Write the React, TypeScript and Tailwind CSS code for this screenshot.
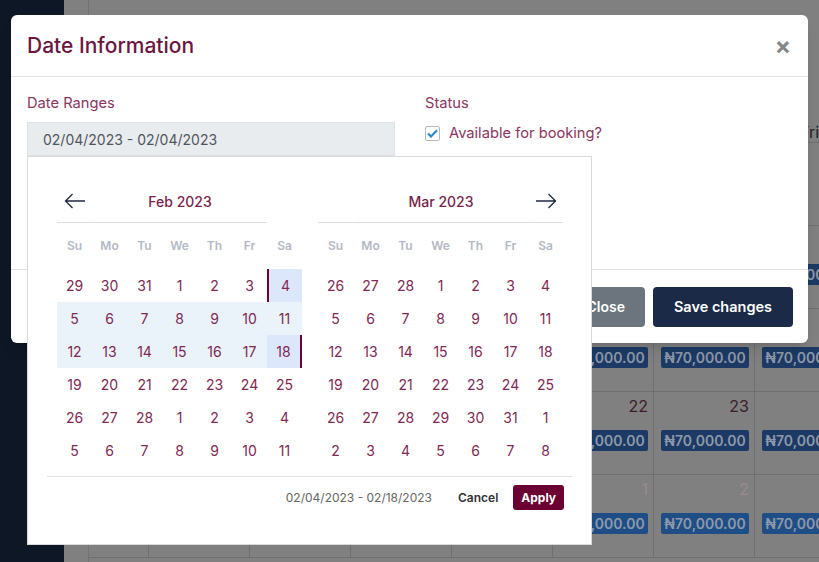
import React from "react";

const DAYS = ["Su", "Mo", "Tu", "We", "Th", "Fr", "Sa"];

const FEB = [
  [29, 30, 31, 1, 2, 3, 4],
  [5, 6, 7, 8, 9, 10, 11],
  [12, 13, 14, 15, 16, 17, 18],
  [19, 20, 21, 22, 23, 24, 25],
  [26, 27, 28, 1, 2, 3, 4],
  [5, 6, 7, 8, 9, 10, 11],
];

const MAR = [
  [26, 27, 28, 1, 2, 3, 4],
  [5, 6, 7, 8, 9, 10, 11],
  [12, 13, 14, 15, 16, 17, 18],
  [19, 20, 21, 22, 23, 24, 25],
  [26, 27, 28, 29, 30, 31, 1],
  [2, 3, 4, 5, 6, 7, 8],
];

type CellKind = "start" | "end" | "in" | "none";

// selected range is Feb 4 -> Feb 18, all in the left month
function februaryKind(r: number, c: number): CellKind {
  if (r === 0 && c === 6) return "start";
  if (r === 2 && c === 6) return "end";
  if (r === 1 || (r === 2 && c < 6)) return "in";
  return "none";
}

const cellClass: Record<CellKind, string> = {
  start: "bg-[#dde7fb] border-l-2 border-l-[#6b0032]",
  end: "bg-[#dde7fb] border-r-2 border-r-[#6b0032]",
  in: "bg-[#e9f3f9]",
  none: "",
};

function ArrowLeft() {
  return (
    <svg width="22" height="16" viewBox="0 0 22 16" fill="none">
      <path d="M21 8H1.5M8.5 1L1.5 8l7 7" stroke="#1f2940" strokeWidth="1.3" />
    </svg>
  );
}

function ArrowRight() {
  return (
    <svg width="22" height="16" viewBox="0 0 22 16" fill="none">
      <path d="M1 8h19.5M13.5 1l7 7-7 7" stroke="#1f2940" strokeWidth="1.3" />
    </svg>
  );
}

function Month({
  title,
  weeks,
  side,
}: {
  title: string;
  weeks: number[][];
  side: "left" | "right";
}) {
  return (
    <div className="w-[245px]">
      <div className="grid h-[43px] grid-cols-7">
        <div className="flex items-center justify-center border-b border-[#dcdde3]">
          {side === "left" && <ArrowLeft />}
        </div>
        <div className="col-span-5 flex items-center justify-center border-b border-l border-b-[#dcdde3] border-l-white text-[14px] font-medium text-[#7a1f4d]">
          {title}
        </div>
        <div
          className={
            side === "right"
              ? "flex items-center justify-center border-b border-l border-b-[#dcdde3] border-l-white"
              : "flex items-center justify-center"
          }
        >
          {side === "right" && <ArrowRight />}
        </div>
      </div>
      <div className="grid h-[46px] grid-cols-7 items-center text-center text-[12px] font-semibold text-[#b4b9c5]">
        {DAYS.map((d) => (
          <span key={d}>{d}</span>
        ))}
      </div>
      {weeks.map((week, r) => (
        <div key={r} className="grid h-[33px] grid-cols-7">
          {week.map((day, c) => {
            const kind = side === "left" ? februaryKind(r, c) : "none";
            return (
              <div
                key={c}
                className={`flex items-center justify-center text-[14px] text-[#7e2854] ${cellClass[kind]}`}
              >
                {day}
              </div>
            );
          })}
        </div>
      ))}
    </div>
  );
}

function DatePicker() {
  return (
    <div className="absolute left-0 top-full z-20 flex h-[389px] w-[565px] flex-col border border-[#dadada] bg-white">
      <div className="flex gap-[16px] pl-[29px] pt-[23px]">
        <Month title="Feb 2023" weeks={FEB} side="left" />
        <Month title="Mar 2023" weeks={MAR} side="right" />
      </div>
      <div className="mx-[19px] mt-[9px] flex items-center justify-end border-t border-[#dedede] pr-[8px] pt-[8px]">
        <span className="text-[12px] text-[#666]">02/04/2023 - 02/18/2023</span>
        <span className="ml-[26px] text-[12px] font-semibold text-[#333]">Cancel</span>
        <button className="ml-[15px] h-[25px] rounded-[3px] bg-[#6b0032] px-[8px] text-[12px] font-bold text-white">
          Apply
        </button>
      </div>
    </div>
  );
}

function Modal() {
  return (
    <div className="absolute left-[11px] top-[15px] z-10 w-[797px] rounded-[6px] bg-white shadow-lg">
      <div className="flex h-[62px] items-center justify-between border-b border-[#dee2e6] pl-4 pr-[17px]">
        <h2 className="text-[21px] font-medium text-[#6a1640]">Date Information</h2>
        <span className="text-[24px] font-bold leading-none text-[#858585]">×</span>
      </div>
      <div className="flex h-[192px] px-4 pt-4">
        <div className="w-[368px]">
          <div className="text-[14.7px] leading-[21px] text-[#8b3560]">Date Ranges</div>
          <div className="relative mt-2">
            <div className="flex h-[34px] items-center border border-[#dfe3e7] bg-[#e9ecef] px-[15px] text-[14px] text-[#4f555b]">
              02/04/2023 - 02/04/2023
            </div>
            <DatePicker />
          </div>
        </div>
        <div className="ml-[30px]">
          <div className="text-[14.7px] leading-[21px] text-[#8b3560]">Status</div>
          <div className="mt-[8px] flex items-center gap-[9px]">
            <span className="flex h-[15px] w-[15px] items-center justify-center rounded-[2px] border border-[#b9b9b9] bg-white">
              <svg width="11" height="9" viewBox="0 0 11 9" fill="none">
                <path d="M1 4.5l3 3L10 1.3" stroke="#2a8bcc" strokeWidth="2.2" />
              </svg>
            </span>
            <span className="text-[14.7px] text-[#8b3560]">Available for booking?</span>
          </div>
        </div>
      </div>
      <div className="flex h-[74px] items-center justify-end gap-2 border-t border-[#dee2e6] px-[15px]">
        <button className="h-[40px] rounded-[4px] bg-[#6c757d] px-5 text-[14px] font-semibold text-white">
          Close
        </button>
        <button className="h-[40px] w-[140px] rounded-[4px] bg-[#1b2a47] text-[14.5px] font-semibold text-white">
          Save changes
        </button>
      </div>
    </div>
  );
}

// rows of the booking calendar behind the modal
const ROWS = [
  { num: ["", "", "", "", "", "", "", ""], chip: "", numColor: "" },
  { num: ["", "", "", "", "", "", "", ""], chip: "bg-[#1c3a65]", numColor: "text-[#3b1b2c]" },
  { num: ["", "", "", "", "", "", "", ""], chip: "bg-[#1c3a65]", numColor: "text-[#3b1b2c]" },
  { num: ["", "", "", "", "", "22", "23", ""], chip: "bg-[#1c3a65]", numColor: "text-[#3b1b2c]" },
  { num: ["", "", "", "", "", "1", "2", ""], chip: "bg-[#1f4e86]", numColor: "text-[#9a8c92]" },
];

function Page() {
  return (
    <div className="flex h-[562px] w-[819px]">
      <div className="w-[64px] shrink-0 bg-[#0d1726]" />
      <div className="flex-1 overflow-hidden bg-[#808080] pl-[24px]">
        <div className="h-full w-[900px] border-l border-[#727272]">
          <div className="h-[120px]" />
          <div className="grid h-[23px] grid-cols-[60px_repeat(7,101px)] border-b border-[#6f6f6f] text-[16px] text-[#222]">
            <span />
            <span />
            <span />
            <span />
            <span />
            <span />
            <span />
            <span className="pl-[45px]">Fri</span>
          </div>
          {ROWS.map((row, r) => (
            <div
              key={r}
              className="grid h-[83px] grid-cols-[60px_repeat(7,101px)] border-b border-[#6f6f6f]"
            >
              {row.num.map((n, i) => (
                <div key={i} className="flex flex-col border-r border-[#6f6f6f] pl-[7px] pr-[5px] pt-[2px]">
                  <span className={`h-[22px] text-right text-[16px] ${row.numColor}`}>{n}</span>
                  {i > 0 && row.chip && (
                    <span
                      className={`mt-[14px] flex h-[21px] w-[88px] items-center justify-center rounded-[2px] text-[14px] font-semibold text-[#8d99a8] ${row.chip}`}
                    >
                      ₦70,000.00
                    </span>
                  )}
                </div>
              ))}
            </div>
          ))}
        </div>
      </div>
    </div>
  );
}

export default function App() {
  return (
    <div className="relative h-[562px] w-[819px] overflow-hidden font-['Inter',sans-serif]">
      <Page />
      <Modal />
    </div>
  );
}
